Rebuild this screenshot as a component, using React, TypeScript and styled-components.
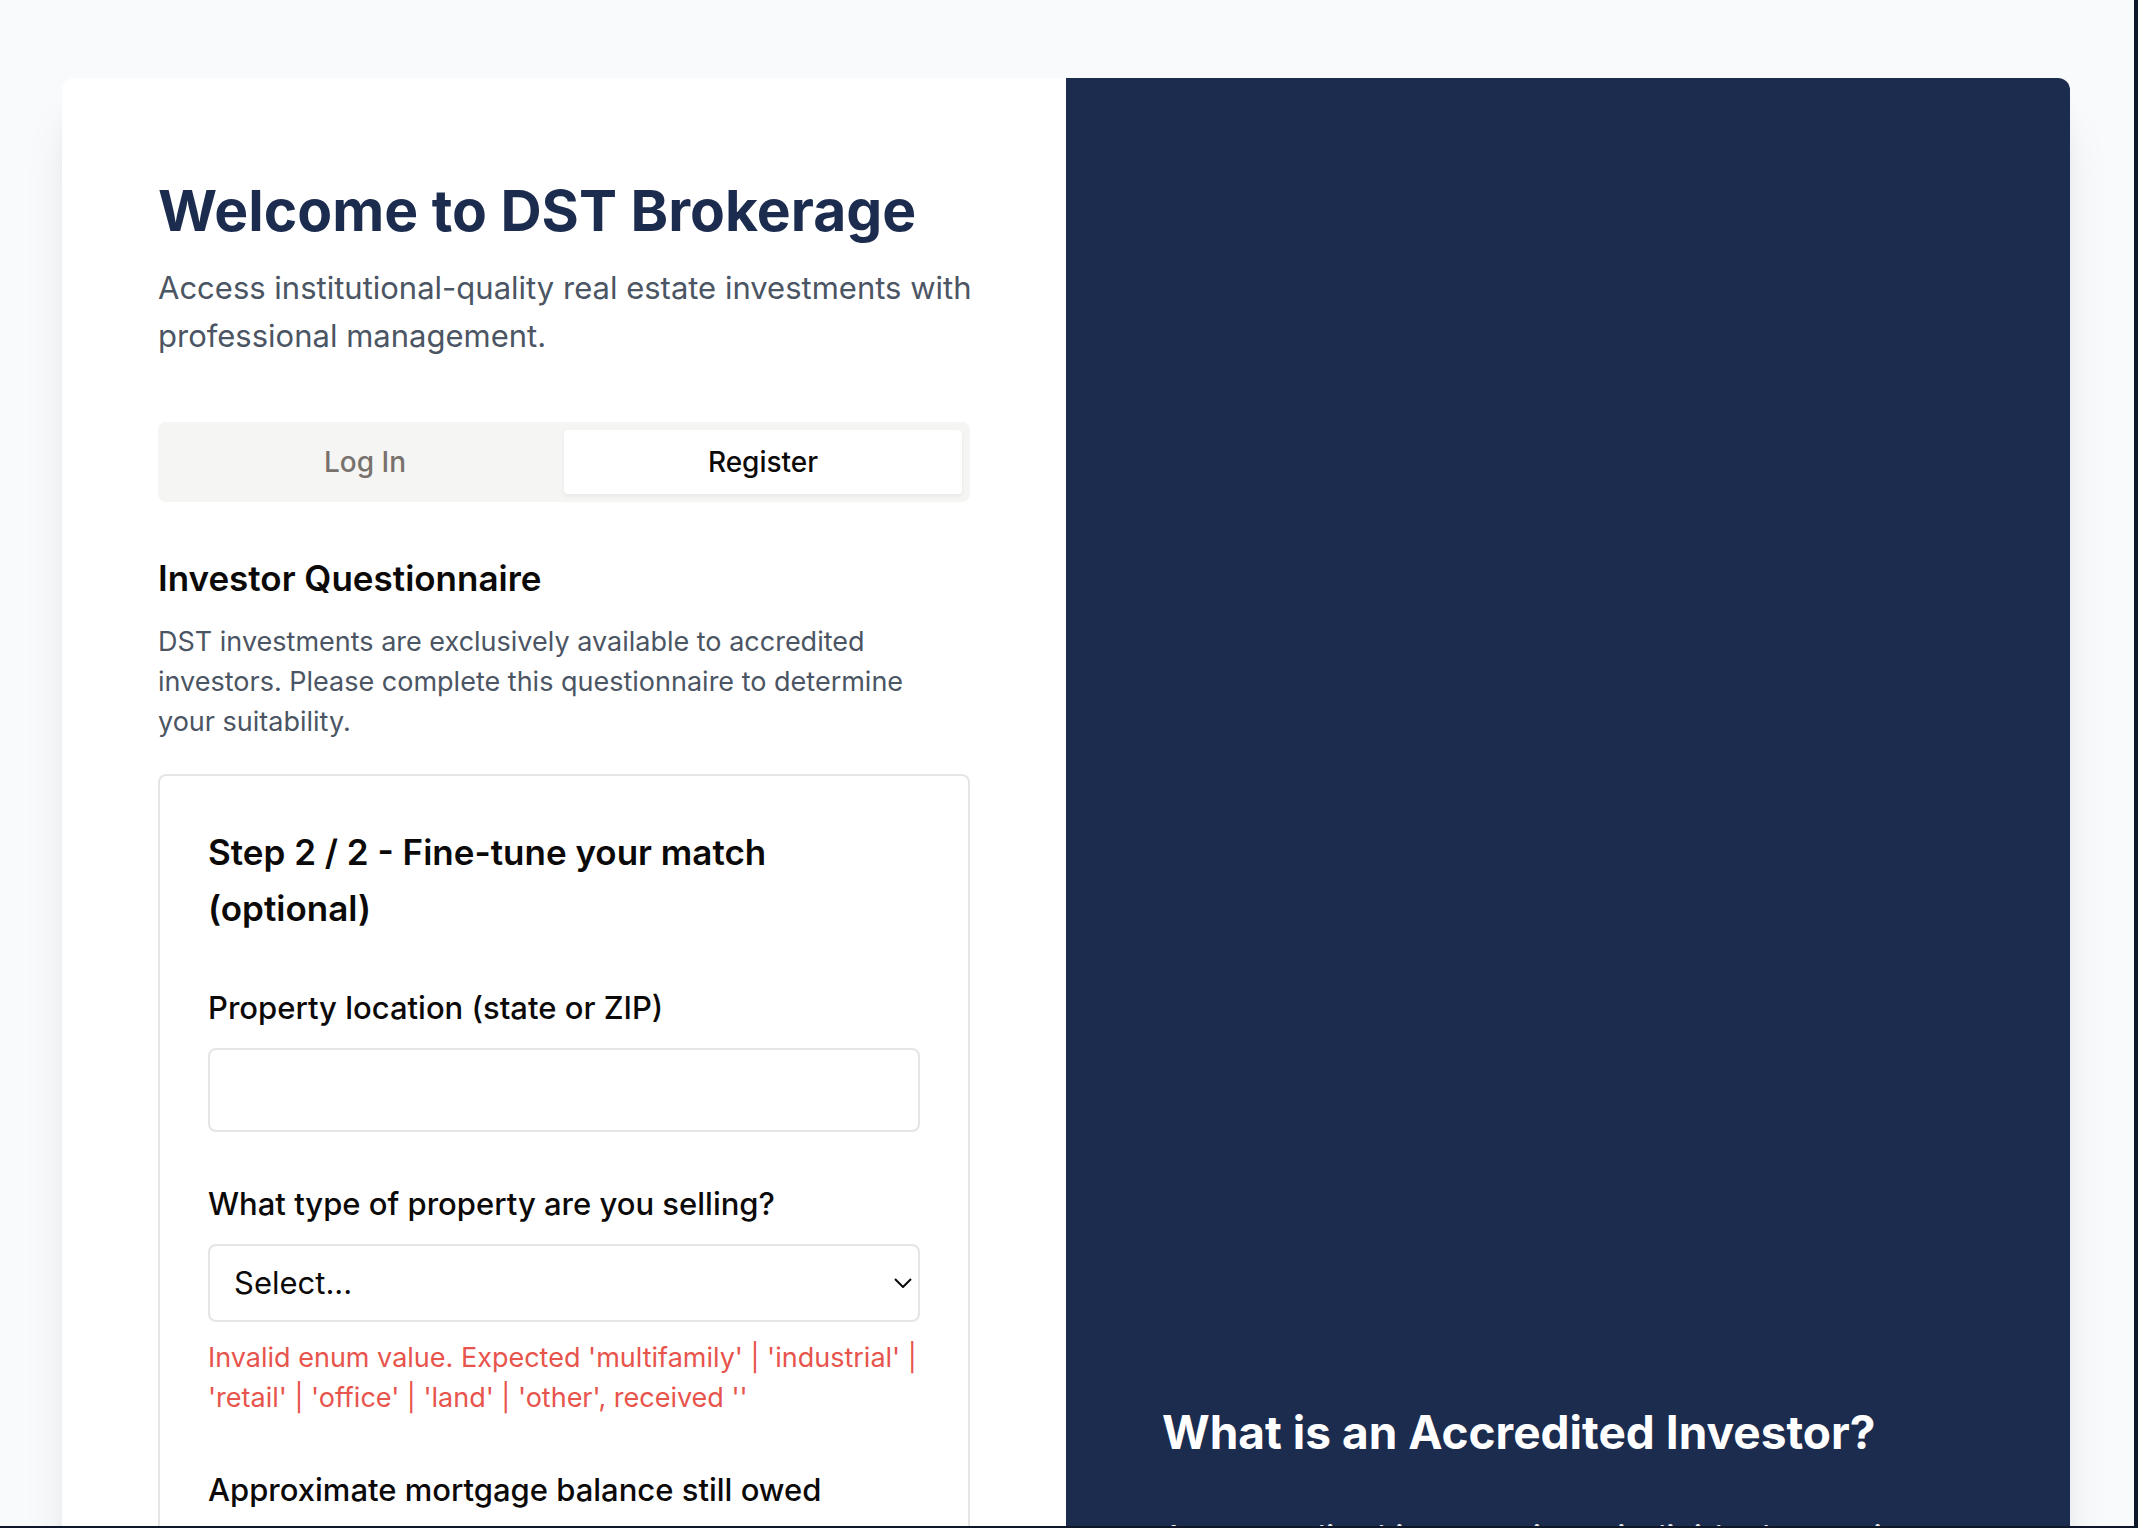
import React from 'react';
import styled, { createGlobalStyle } from 'styled-components';

const GlobalStyle = createGlobalStyle`
  *, *::before, *::after { box-sizing: border-box; }
  body { margin: 0; background: #0f172a; }
  h1, h2, h3, p { margin: 0; }
  button, input, select { font: inherit; color: inherit; }
`;

const Frame = styled.div`
  height: 100vh;
  overflow: hidden;
  border: solid #0f172a;
  border-width: 0 4px 2px 0;
  background: #f9fafb;
  color: #0c0a09;
  font-family: Inter, 'Liberation Sans', sans-serif;
  font-size: 31px;
  line-height: 48px;
`;

const Page = styled.main`
  padding: 78px 64px 78px 62px;
`;

const Card = styled.div`
  display: grid;
  grid-template-columns: 1fr 1fr;
  min-height: 200vh;
  overflow: hidden;
  border-radius: 12px;
  background: #ffffff;
  box-shadow: 0 40px 50px -10px rgba(0, 0, 0, 0.1), 0 16px 20px -12px rgba(0, 0, 0, 0.1);
`;

const FormPane = styled.section`
  display: flex;
  flex-direction: column;
  gap: 48px;
  min-width: 0;
  padding: 96px;
`;

const Intro = styled.header`
  display: flex;
  flex-direction: column;
  gap: 16px;
  padding-bottom: 14px;
`;

const Title = styled.h1`
  color: #1c2c4f;
  font-size: 57px;
  font-weight: 700;
  line-height: 74px;
`;

const Lead = styled.p`
  color: #4b5563;
  white-space: nowrap;
`;

const Tabs = styled.div`
  display: grid;
  grid-template-columns: 1fr 1fr;
  padding: 8px;
  border-radius: 8px;
  background: #f5f5f4;
`;

const Tab = styled.button<{ $active?: boolean }>`
  height: 64px;
  padding: 0 24px;
  border: 0;
  border-radius: 4px;
  background: ${(p) => (p.$active ? '#ffffff' : 'transparent')};
  box-shadow: ${(p) => (p.$active ? '0 2px 4px rgba(0, 0, 0, 0.06)' : 'none')};
  color: ${(p) => (p.$active ? '#0c0a09' : '#78716c')};
  font-size: 28px;
  font-weight: 500;
  line-height: 40px;
`;

const Questionnaire = styled.div`
  display: flex;
  flex-direction: column;
  gap: 16px;
`;

const Heading = styled.h2`
  font-size: 35px;
  font-weight: 600;
  line-height: 56px;
`;

const Note = styled.p`
  padding: 0 16px 16px 0;
  color: #4b5563;
  font-size: 27px;
  line-height: 40px;
`;

const StepBox = styled.form`
  display: flex;
  flex-direction: column;
  gap: 48px;
  padding: 48px;
  border: 2px solid #e5e5e5;
  border-radius: 8px;
`;

const Field = styled.div`
  display: flex;
  flex-direction: column;
  gap: 16px;
`;

const Label = styled.label`
  font-weight: 500;
`;

const TextInput = styled.input`
  width: 100%;
  height: 84px;
  padding: 16px 24px;
  border: 2px solid #e5e5e5;
  border-radius: 8px;
  background: #ffffff;
`;

const SelectWrap = styled.div`
  display: grid;
  position: relative;
`;

const Select = styled.select`
  width: 100%;
  height: 78px;
  padding: 0 48px 0 24px;
  border: 2px solid #e5e5e5;
  border-radius: 8px;
  background: #ffffff;
  appearance: none;
`;

const Chevron = styled.svg`
  position: absolute;
  top: 34px;
  right: 8px;
  width: 18px;
  height: 10px;
  pointer-events: none;
`;

const ErrorText = styled.p`
  color: #e7544c;
  font-size: 27px;
  line-height: 40px;
`;

const InfoPane = styled.aside`
  display: flex;
  flex-direction: column;
  gap: 48px;
  padding: 1322px 96px 96px;
  background: #1c2c4f;
  color: #ffffff;
`;

const InfoTitle = styled.h2`
  font-size: 46px;
  font-weight: 700;
  line-height: 64px;
`;

const InfoText = styled.p`
  color: #e5e7eb;
  font-size: 34px;
  line-height: 52px;
`;

export default function App() {
  return (
    <Frame>
      <GlobalStyle />
      <Page>
        <Card>
          <FormPane>
            <Intro>
              <Title>Welcome to DST Brokerage</Title>
              <Lead>
                Access institutional-quality real estate investments with
                <br />
                professional management.
              </Lead>
            </Intro>
            <Tabs role="tablist">
              <Tab type="button" role="tab" aria-selected={false}>Log In</Tab>
              <Tab type="button" role="tab" aria-selected $active>Register</Tab>
            </Tabs>
            <Questionnaire>
              <Heading>Investor Questionnaire</Heading>
              <Note>
                DST investments are exclusively available to accredited investors. Please complete
                this questionnaire to determine your suitability.
              </Note>
              <StepBox>
                <Heading as="h3">Step 2 / 2 - Fine-tune your match (optional)</Heading>
                <Field>
                  <Label htmlFor="location">Property location (state or ZIP)</Label>
                  <TextInput id="location" type="text" />
                </Field>
                <Field>
                  <Label htmlFor="property-type">What type of property are you selling?</Label>
                  <SelectWrap>
                    <Select id="property-type" defaultValue="" aria-invalid aria-describedby="property-type-error">
                      <option value="">Select...</option>
                    </Select>
                    <Chevron viewBox="0 0 18 10" aria-hidden="true">
                      <path d="M1 1 L9 9 L17 1" fill="none" stroke="#0c0a09" strokeWidth="2" />
                    </Chevron>
                  </SelectWrap>
                  <ErrorText id="property-type-error">
                    Invalid enum value. Expected 'multifamily' | 'industrial' | 'retail' | 'office' |
                    'land' | 'other', received ''
                  </ErrorText>
                </Field>
                <Field>
                  <Label htmlFor="mortgage">Approximate mortgage balance still owed</Label>
                  <TextInput id="mortgage" type="text" />
                </Field>
              </StepBox>
            </Questionnaire>
          </FormPane>
          <InfoPane>
            <InfoTitle>What is an Accredited Investor?</InfoTitle>
            <InfoText>An accredited investor is an individual or entity</InfoText>
          </InfoPane>
        </Card>
      </Page>
    </Frame>
  );
}
